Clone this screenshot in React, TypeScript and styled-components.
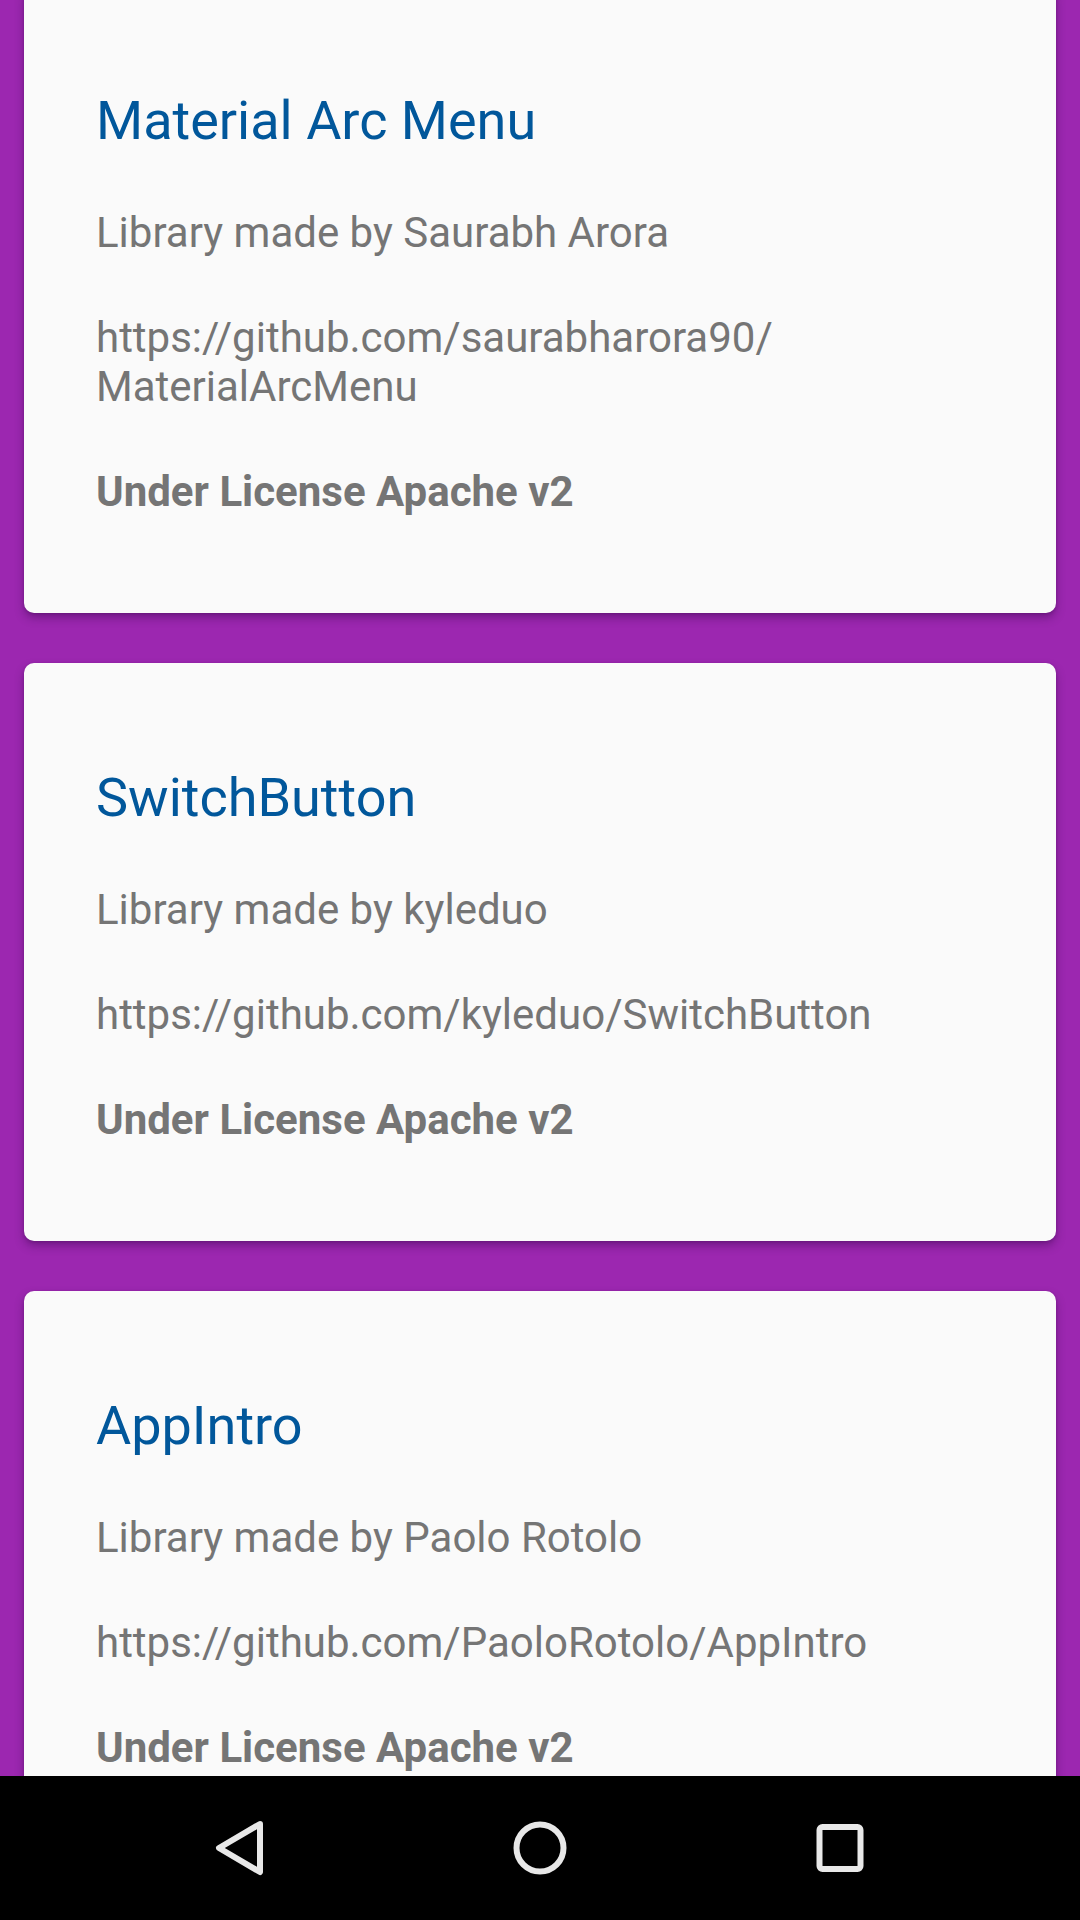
import styled, { createGlobalStyle } from "styled-components";

const GlobalStyle = createGlobalStyle`
  html, body {
    margin: 0;
    padding: 0;
    background: #9c27b0;
  }
  body {
    font-family: Roboto, "Noto Sans", sans-serif;
  }
`

type Library = {
  name: string
  author: string
  url: string[]
  license: string
}

const libraries: Library[] = [
  {
    name: "Material Arc Menu",
    author: "Saurabh Arora",
    url: ["https://github.com/saurabharora90/", "MaterialArcMenu"],
    license: "Apache v2",
  },
  {
    name: "SwitchButton",
    author: "kyleduo",
    url: ["https://github.com/kyleduo/SwitchButton"],
    license: "Apache v2",
  },
  {
    name: "AppIntro",
    author: "Paolo Rotolo",
    url: ["https://github.com/PaoloRotolo/AppIntro"],
    license: "Apache v2",
  },
]

const Screen = styled.div`
  display: flex;
  flex-direction: column;
  width: 1080px;
  height: 1920px;
  overflow: hidden;
  background: #9c27b0;
`

const List = styled.div`
  flex: 1;
  overflow: hidden;
  padding: 0 24px;
`

// list is scrolled a little, so the first card's top edge is off screen
const Track = styled.div`
  display: flex;
  flex-direction: column;
  gap: 50px;
  margin-top: -14px;
`

const Card = styled.section`
  flex-shrink: 0;
  display: flex;
  flex-direction: column;
  padding: 103px 72px 97px;
  background: #fafafa;
  border-radius: 10px;
  box-shadow: 0 5px 10px rgba(40, 0, 60, 0.35), 0 1px 3px rgba(40, 0, 60, 0.2);
`

const Title = styled.h2`
  margin: 0 0 56px;
  font-size: 54px;
  font-weight: 400;
  line-height: 63px;
  color: #01579b;
`

const Line = styled.p<{ $bold?: boolean }>`
  margin: 0 0 56px;
  font-size: 42px;
  line-height: 49px;
  font-weight: ${p => (p.$bold ? 700 : 400)};
  color: #757575;

  &:last-child {
    margin-bottom: 0;
  }
`

const NavBar = styled.nav`
  flex-shrink: 0;
  height: 144px;
  display: flex;
  justify-content: center;
  align-items: center;
  background: #000;
`

const NavButton = styled.div`
  width: 300px;
  height: 100%;
  display: flex;
  align-items: center;
  justify-content: center;

  svg {
    width: 60px;
    height: 60px;
    fill: none;
    stroke: #e8e8e8;
    stroke-width: 6;
    stroke-linejoin: round;
  }
`

function App() {
  return (
    <Screen>
      <GlobalStyle />
      <List>
        <Track>
          {libraries.map(lib => (
            <Card key={lib.name}>
              <Title>{lib.name}</Title>
              <Line>Library made by {lib.author}</Line>
              <Line>
                {lib.url.map((part, i) => (
                  <span key={part}>
                    {i > 0 && <wbr />}
                    {part}
                  </span>
                ))}
              </Line>
              <Line $bold>Under License {lib.license}</Line>
            </Card>
          ))}
        </Track>
      </List>
      <NavBar>
        <NavButton>
          <svg viewBox="0 0 60 60">
            <path d="M50 6 L9 30 L50 54 Z" />
          </svg>
        </NavButton>
        <NavButton>
          <svg viewBox="0 0 60 60">
            <circle cx="30" cy="30" r="23.5" />
          </svg>
        </NavButton>
        <NavButton>
          <svg viewBox="0 0 60 60">
            <rect x="9.5" y="9" width="41" height="42" rx="3" />
          </svg>
        </NavButton>
      </NavBar>
    </Screen>
  )
}

export default App
